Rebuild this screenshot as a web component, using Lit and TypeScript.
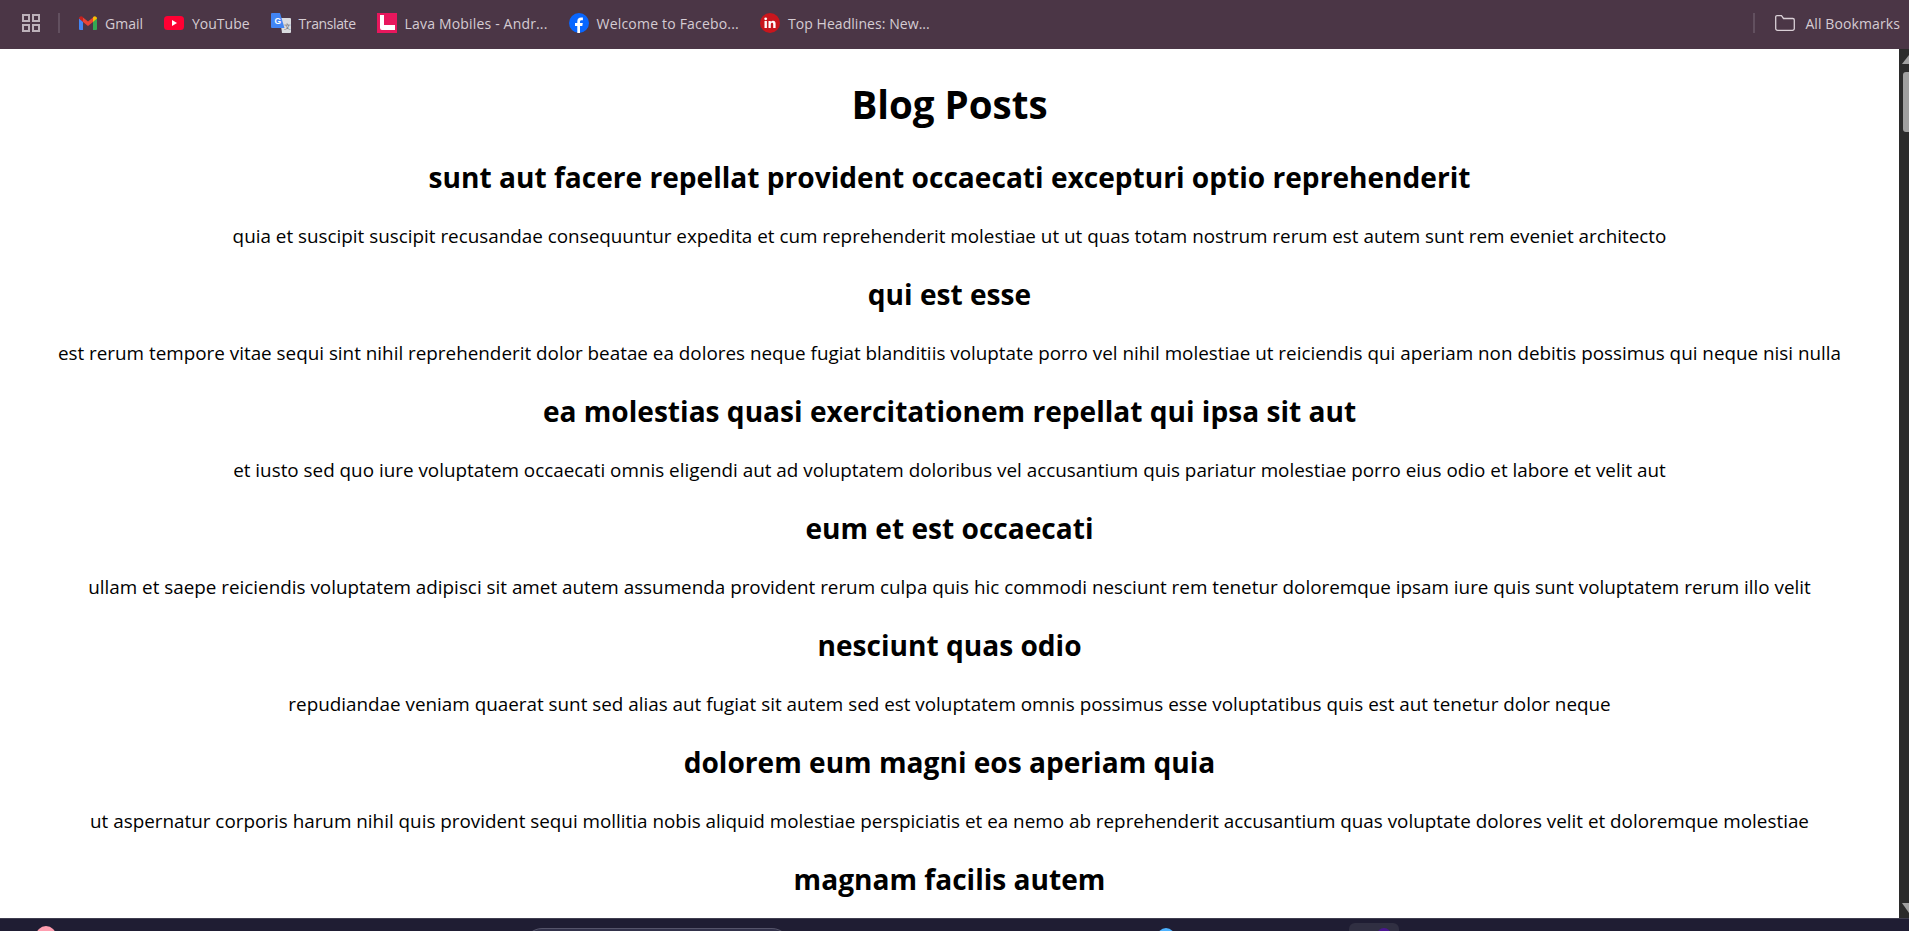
import { LitElement, html, css, svg } from 'lit';
import { customElement } from 'lit/decorators.js';

const POSTS = [
  ['sunt aut facere repellat provident occaecati excepturi optio reprehenderit', 'quia et suscipit suscipit recusandae consequuntur expedita et cum reprehenderit molestiae ut ut quas totam nostrum rerum est autem sunt rem eveniet architecto'],
  ['qui est esse', 'est rerum tempore vitae sequi sint nihil reprehenderit dolor beatae ea dolores neque fugiat blanditiis voluptate porro vel nihil molestiae ut reiciendis qui aperiam non debitis possimus qui neque nisi nulla'],
  ['ea molestias quasi exercitationem repellat qui ipsa sit aut', 'et iusto sed quo iure voluptatem occaecati omnis eligendi aut ad voluptatem doloribus vel accusantium quis pariatur molestiae porro eius odio et labore et velit aut'],
  ['eum et est occaecati', 'ullam et saepe reiciendis voluptatem adipisci sit amet autem assumenda provident rerum culpa quis hic commodi nesciunt rem tenetur doloremque ipsam iure quis sunt voluptatem rerum illo velit'],
  ['nesciunt quas odio', 'repudiandae veniam quaerat sunt sed alias aut fugiat sit autem sed est voluptatem omnis possimus esse voluptatibus quis est aut tenetur dolor neque'],
  ['dolorem eum magni eos aperiam quia', 'ut aspernatur corporis harum nihil quis provident sequi mollitia nobis aliquid molestiae perspiciatis et ea nemo ab reprehenderit accusantium quas voluptate dolores velit et doloremque molestiae'],
  ['magnam facilis autem', ''],
];

const ICONS = {
  gmail: svg`<svg width="18" height="14" viewBox="0 0 18 14"><path d="M0 2v11a1 1 0 0 0 1 1h3V5.500z" fill="#4285f4"/><path d="M18 2v11a1 1 0 0 1-1 1h-3V5.500z" fill="#34a853"/><path d="M4 6V1.500L9 5.500l5-4V6L9 10z" fill="#ea4335"/><path d="M0 2.500C0 .5 2.200-.5 3.600.7L4 1.500V6z" fill="#c5221f"/><path d="M18 2.500C18 .5 15.800-.5 14.400.7L14 1.500V6z" fill="#fbbc04"/></svg>`,
  youtube: svg`<svg width="20" height="14" viewBox="0 0 20 14"><rect width="20" height="14" rx="3.5" fill="#ff0033"/><path d="M8 4l5 3-5 3z" fill="#fff"/></svg>`,
  translate: svg`<svg width="20" height="20" viewBox="0 0 20 20"><path d="M9 5h10a1 1 0 0 1 1 1v13a1 1 0 0 1-1 1H11z" fill="#dadce0"/><path d="M1 0h8l4.500 15H1a1 1 0 0 1-1-1V1a1 1 0 0 1 1-1z" fill="#4285f4"/><text x="3.500" y="10.500" font-size="8.500" font-weight="700" font-family="Liberation Sans" fill="#fff">G</text><text x="12.500" y="16" font-size="7" font-family="Liberation Sans" fill="#5f6368">文</text></svg>`,
  lava: svg`<svg width="20" height="20" viewBox="0 0 20 20"><rect width="20" height="20" fill="#e8175d"/><path d="M3 2h4v10h11v5H5a2 2 0 0 1-2-2z" fill="#fff"/></svg>`,
  facebook: svg`<svg width="20" height="20" viewBox="0 0 20 20"><circle cx="10" cy="10" r="10" fill="#0866ff"/><path d="M8.300 20v-7H6v-3h2.300V8.400c0-2.700 1.400-4 3.800-4 .7 0 1.400.1 1.800.2v2.600h-1.300c-1.200 0-1.600.6-1.600 1.600V10h2.800l-.5 3h-2.300v7z" fill="#fff"/></svg>`,
  inshorts: svg`<svg width="20" height="20" viewBox="0 0 20 20"><circle cx="10" cy="10" r="10" fill="#c8161d"/><rect x="4.500" y="8" width="2.400" height="7" fill="#fff"/><circle cx="5.700" cy="5.800" r="1.400" fill="#fff"/><path d="M8.500 8h2.300v1c.5-.8 1.300-1.200 2.200-1.200 1.800 0 2.600 1.100 2.600 3V15h-2.400v-3.700c0-1-.3-1.500-1.100-1.500s-1.300.6-1.300 1.600V15H8.500z" fill="#fff"/></svg>`,
};

// last value: letter spacing that brings the label to the measured width
const BOOKMARKS: [keyof typeof ICONS, string, number][] = [
  ['gmail', 'Gmail', 0],
  ['youtube', 'YouTube', 0],
  ['translate', 'Translate', -0.4],
  ['lava', 'Lava Mobiles - Andr...', 0.17],
  ['facebook', 'Welcome to Facebo...', 0.19],
  ['inshorts', 'Top Headlines: New...', 0.06],
];

@customElement('app-root')
export class AppRoot extends LitElement {
  static styles = css`
    :host {
      display: flex;
      flex-direction: column;
      height: 931px;
      overflow: hidden;
      background: #fff;
      font-family: 'Open Sans', 'Noto Sans', sans-serif;
      color: #000;
    }
    .bar {
      flex: 0 0 49px;
      display: flex;
      align-items: center;
      padding: 0 0 3px 22px;
      background: #4b3646;
      color: #d5ccd3;
      font-size: 14px;
      box-sizing: border-box;
    }
    .apps { display: block; }
    .sep {
      width: 2px;
      height: 20px;
      background: #62505f;
      margin: 0 19px 0 18px;
    }
    .bookmark {
      display: flex;
      align-items: center;
      gap: 8px;
      margin-right: 21px;
      white-space: nowrap;
    }
    .bookmark svg { display: block; flex: none; }
    .right {
      margin-left: auto;
      display: flex;
      align-items: center;
    }
    .right .sep { margin: 0 20px 0 0; }
    .right svg { display: block; margin-right: 10px; }
    .right span { margin-right: 9px; letter-spacing: 0.1px; }
    .middle {
      flex: 1;
      min-height: 0;
      display: flex;
    }
    .content {
      flex: 1;
      min-width: 0;
      overflow: hidden;
      text-align: center;
    }
    h1 {
      margin: 28px 0 0;
      font-size: 38.5px;
      line-height: 54px;
      font-weight: 700;
    }
    h2 {
      margin: 26px 0 0;
      font-size: 28.1px;
      line-height: 38px;
      font-weight: 700;
    }
    h1 + h2 { margin-top: 27px; }
    p {
      margin: 27px 0 0;
      font-size: 18.85px;
      line-height: 26px;
      white-space: nowrap;
    }
    .scroll {
      flex: 0 0 10px;
      box-sizing: border-box;
      padding-left: 3px;
      background: #2b2b2b;
      display: flex;
      flex-direction: column;
    }
    .scroll svg { display: block; flex: none; }
    .up { margin-top: 6px; }
    .down { margin-top: auto; margin-bottom: 5px; }
    .thumb {
      width: 6px;
      height: 60px;
      margin: 8px 0 0 1px;
      background: #a0a0a0;
      border-radius: 3px 0 0 3px;
    }
    .task {
      flex: 0 0 13px;
      box-sizing: border-box;
      border-top: 1px solid #3f3e4f;
      background: #1f1d33;
      display: flex;
      overflow: hidden;
    }
    .pink {
      flex: none;
      width: 20px;
      height: 20px;
      margin: 7px 0 0 36px;
      border-radius: 50%;
      background: #ff9eb0;
    }
    .search {
      flex: none;
      box-sizing: border-box;
      width: 266px;
      height: 36px;
      margin: 9px 0 0 468px;
      border: 1px solid #55546a;
      border-radius: 18px;
      background: #32314a;
    }
    .blue {
      flex: none;
      width: 18px;
      height: 18px;
      margin: 9px 0 0 367px;
      border-radius: 50%;
      background: #4db2ff;
    }
    .tile {
      flex: none;
      box-sizing: border-box;
      width: 50px;
      height: 20px;
      margin: 4px 0 0 174px;
      padding: 5px 0 0 28px;
      border-radius: 6px;
      background: #302f42;
    }
    .tile-icon {
      width: 14px;
      height: 14px;
      border-radius: 50%;
      background: #4a1690;
    }
  `;

  render() {
    return html`
      <div class="bar">
        <svg class="apps" width="18" height="18" viewBox="0 0 18 18" fill="none" stroke="#bdb2ba" stroke-width="2">
          <rect x="1" y="1" width="6" height="6" /><rect x="11" y="1" width="6" height="6" />
          <rect x="1" y="11" width="6" height="6" /><rect x="11" y="11" width="6" height="6" />
        </svg>
        <div class="sep"></div>
        ${BOOKMARKS.map(([icon, label, spacing]) => html`<div class="bookmark">${ICONS[icon]}<span style="letter-spacing: ${spacing}px">${label}</span></div>`)}
        <div class="right">
          <div class="sep"></div>
          <svg width="20" height="16" viewBox="0 0 20 16" fill="none" stroke="#d9cfd6" stroke-width="1.3"><path d="M.7 13.500V2A1.300 1.300 0 0 1 2 .7h4.500L8.500 3.500h9.300a1.500 1.500 0 0 1 1.500 1.500v8.500a1.800 1.800 0 0 1-1.800 1.800H2.500A1.800 1.800 0 0 1 .7 13.500z"/></svg>
          <span>All Bookmarks</span>
        </div>
      </div>
      <div class="middle">
        <div class="content">
          <h1>Blog Posts</h1>
          ${POSTS.map(([title, body]) => html`<h2>${title}</h2>${body ? html`<p>${body}</p>` : ''}`)}
        </div>
        <div class="scroll">
          <svg class="up" width="7" height="9" viewBox="0 0 7 9"><path d="M0 9L7 0v9z" fill="#a0a0a0"/></svg>
          <div class="thumb"></div>
          <svg class="down" width="7" height="10" viewBox="0 0 7 10"><path d="M0 0h7v10z" fill="#a0a0a0"/></svg>
        </div>
      </div>
      <div class="task">
        <div class="pink"></div>
        <div class="search"></div>
        <div class="blue"></div>
        <div class="tile"><div class="tile-icon"></div></div>
      </div>
    `;
  }
}
